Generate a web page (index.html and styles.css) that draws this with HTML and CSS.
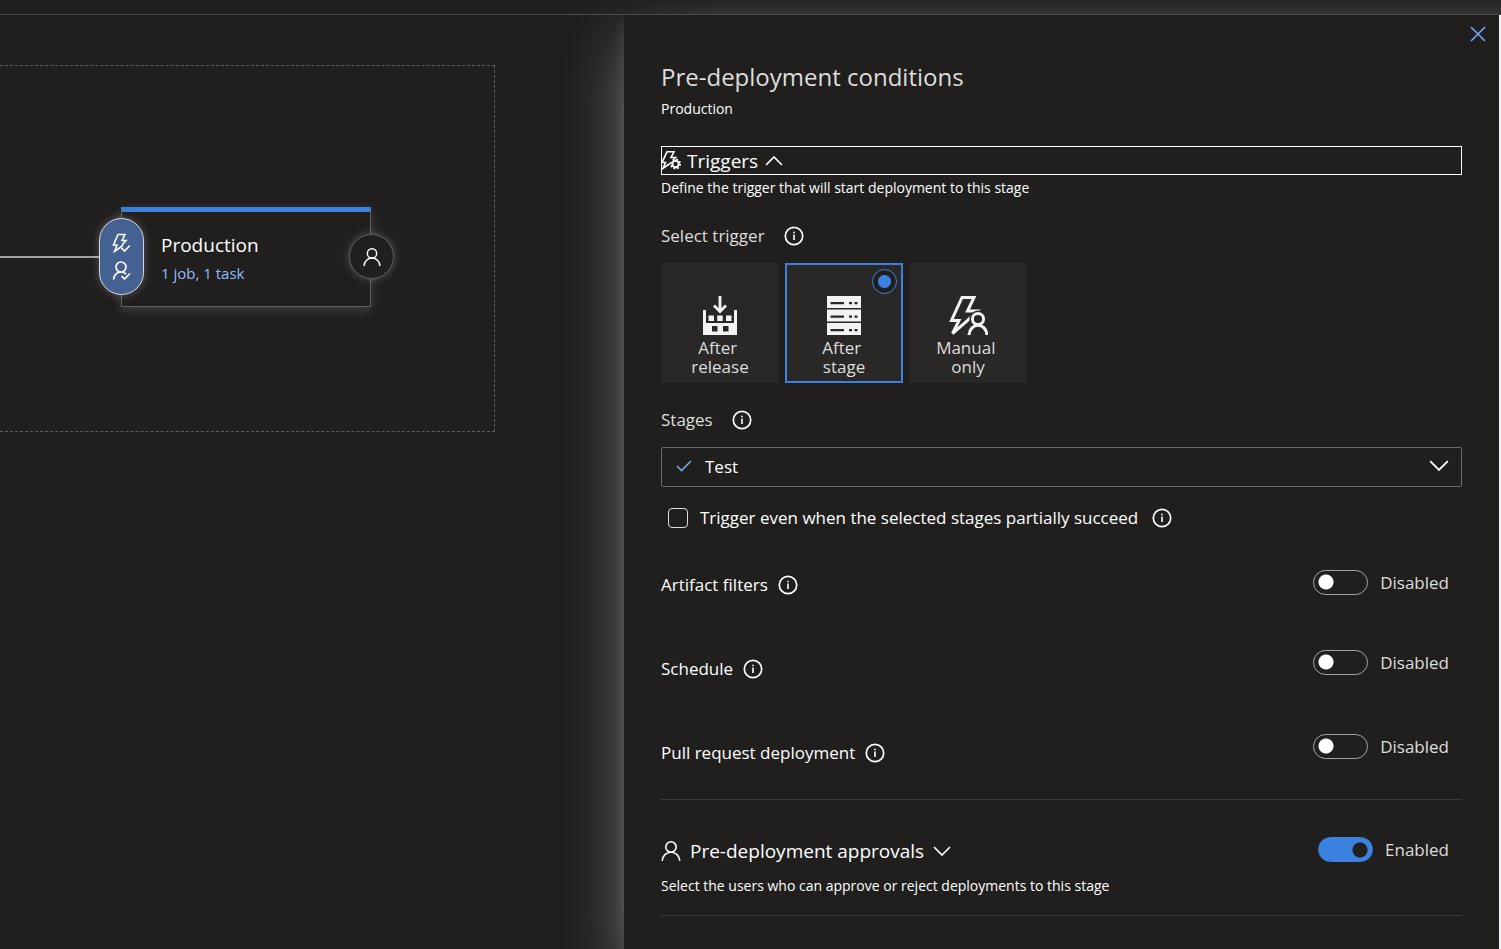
FILE: index.html
```html
<!DOCTYPE html>
<html lang="en">
<head>
<meta charset="utf-8">
<title>Pre-deployment conditions</title>
<link rel="stylesheet" href="styles.css">
</head>
<body>
<svg class="defs" aria-hidden="true">
  <symbol id="info" viewBox="0 0 20 20"><circle cx="10" cy="10" r="8.7" fill="none" stroke="currentColor" stroke-width="1.7"/><path d="M9.2 8.4h1.6V14H9.2zM9.2 5.8h1.6v1.5H9.2z" fill="currentColor"/></symbol>
  <symbol id="person" viewBox="0 0 20 20"><g fill="none" stroke="currentColor" stroke-width="1.6"><circle cx="10" cy="6" r="5.2"/><path d="M1.2 20c.3-5.200 4-8.800 8.800-8.800s8.500 3.600 8.800 8.800"/></g></symbol>
  <symbol id="chevron" viewBox="0 0 18 10"><path d="M1 1l8 8 8-8" fill="none" stroke="currentColor" stroke-width="1.7"/></symbol>
</svg>
<header class="topbar"></header>
<main class="workspace">
  <section class="canvas" aria-label="Stages">
    <div class="stages">
      <div class="connector"></div>
      <article class="stage">
        <button class="pre" aria-label="Pre-deployment conditions">
          <svg width="20" height="20" viewBox="0 0 20 20" fill="none" stroke="currentColor" stroke-width="1.6"><path d="M11 12.500L2.500 18.500 5 12H1.500L6 1.500H13L10 7.500H14L10 12"/><path d="M9.500 15l3 3 5.500-5.500"/></svg>
          <svg width="20" height="20" viewBox="0 0 20 20" fill="none" stroke="currentColor" stroke-width="1.700"><circle cx="9" cy="6" r="5"/><path d="M1.500 18.500c.3-4.500 3.500-7.500 7.500-7.500 2 0 3.500.7 5 2"/><path d="M9.500 15l3 3 5.500-5.500"/></svg>
        </button>
        <h2 class="stage-name">Production</h2>
        <a class="stage-link" href="#">1 job, 1 task</a>
        <button class="post" aria-label="Post-deployment conditions"><svg width="18" height="20"><use href="#person"/></svg></button>
      </article>
    </div>
  </section>
  <aside class="panel">
    <div class="panel-top">
      <button class="close" aria-label="Close"><svg width="16" height="16" viewBox="0 0 16 16"><path d="M1 1l14 14M15 1L1 15" stroke="currentColor" stroke-width="1.600"/></svg></button>
    </div>
    <div class="panel-body">
      <h1 class="title">Pre-deployment conditions</h1>
      <p class="subtitle">Production</p>

      <button class="triggers" aria-expanded="true">
        <svg class="trigger-icon" width="20" height="20" viewBox="0 0 20 20" fill="none" stroke="currentColor" stroke-width="1.600"><path d="M8 12.500L.8 17.500 3.500 11.500H0L5 .8H12L9 6.500H13.500L11.500 8.500"/><circle cx="13.500" cy="13" r="3.200" stroke-width="2"/><circle cx="13.500" cy="13" r="4.700" stroke-width="1.700" stroke-dasharray="1.850 1.840"/></svg>
        <span>Triggers</span>
        <svg class="up" width="18" height="10"><use href="#chevron"/></svg>
      </button>
      <p class="hint">Define the trigger that will start deployment to this stage</p>

      <div class="field-label wide"><span id="trigger-label">Select trigger</span><svg width="20" height="20"><use href="#info"/></svg></div>
      <div class="tiles" role="radiogroup" aria-labelledby="trigger-label">
        <label class="tile"><input type="radio" name="trigger">
          <svg width="34" height="39" viewBox="0 0 34 39"><path d="M17 0v15M11 9.500l6 6 6-6" fill="none" stroke="currentColor" stroke-width="2.800"/><path fill="currentColor" fill-rule="evenodd" d="M0 14h3v13h28V14h3v25H0zM9 30v5.500h5.500V30zM20 30v5.500h5.500V30zM5.500 19.500H11V25H5.500zM14.200 19.500h5.500V25h-5.500zM23 19.500h5.500V25H23z"/></svg>
          <span>After&nbsp;<br>release</span></label>
        <label class="tile"><input type="radio" name="trigger" checked>
          <svg width="34" height="39" viewBox="0 0 34 39"><path fill="currentColor" fill-rule="evenodd" d="M0 0h34v12H0zM3.500 6v2.200H17V6zM22 6v2.200h3V6zM27.500 6v2.200h3V6zM0 13.500h34v12H0zM3.500 19.500v2.200H17v-2.200zM22 19.500v2.200h3v-2.200zM27.500 19.500v2.200h3v-2.200zM0 27h34v12H0zM3.500 33v2.200H17V33zM22 33v2.200h3V33zM27.500 33v2.200h3V33z"/></svg>
          <span>After&nbsp;<br>stage</span></label>
        <label class="tile"><input type="radio" name="trigger">
          <svg width="39" height="39" viewBox="0 0 39 39" fill="none" stroke="currentColor" stroke-width="3"><path d="M13 1.500H25L18.500 15H28L17.500 25.500 3.500 37.500 10 24.500H2.500Z"/><g class="halo"><circle cx="29" cy="23" r="5.600"/><path d="M20 39c.5-6 4.500-9.800 9-9.800s8.500 3.800 9 9.800"/></g><circle cx="29" cy="23" r="5.600"/><path d="M20 39c.5-6 4.500-9.800 9-9.800s8.500 3.800 9 9.800"/></svg>
          <span>Manual&nbsp;<br>only</span></label>
      </div>

      <div class="field-label wide stages-label"><label for="stages">Stages</label><svg width="20" height="20"><use href="#info"/></svg></div>
      <div class="select-box">
        <svg class="tick" width="16" height="12" viewBox="0 0 16 12"><path d="M1 6l4.500 4.500L15 1" fill="none" stroke="currentColor" stroke-width="1.600"/></svg>
        <select id="stages"><option>Test</option></select>
        <svg class="arrow" width="20" height="11"><use href="#chevron"/></svg>
      </div>
      <div class="check-row">
        <input type="checkbox" id="partial"><label for="partial">Trigger even when the selected stages partially succeed</label>
        <svg width="20" height="20"><use href="#info"/></svg>
      </div>

      <div class="option"><div class="field-label"><label for="filters">Artifact filters</label><svg width="20" height="20"><use href="#info"/></svg></div>
        <label class="toggle"><input type="checkbox" role="switch" id="filters">Disabled</label></div>
      <div class="option"><div class="field-label"><label for="schedule">Schedule</label><svg width="20" height="20"><use href="#info"/></svg></div>
        <label class="toggle"><input type="checkbox" role="switch" id="schedule">Disabled</label></div>
      <div class="option"><div class="field-label"><label for="pr">Pull request deployment</label><svg width="20" height="20"><use href="#info"/></svg></div>
        <label class="toggle"><input type="checkbox" role="switch" id="pr">Disabled</label></div>

      <section class="approvals">
        <div class="approvals-row">
          <button class="approvals-title" aria-expanded="false"><svg width="20" height="20"><use href="#person"/></svg><span>Pre-deployment approvals</span><svg width="18" height="10"><use href="#chevron"/></svg></button>
          <label class="toggle"><input type="checkbox" role="switch" checked>Enabled</label>
        </div>
        <p class="hint">Select the users who can approve or reject deployments to this stage</p>
      </section>
    </div>
  </aside>
</main>
</body>
</html>
```
FILE: styles.css
```css
* { box-sizing: border-box; }
body {
  margin: 0;
  min-height: 100vh;
  display: flex;
  flex-direction: column;
  background: #201f1e;
  color: #fff;
  font: 17px/24px "Open Sans", "Noto Sans", sans-serif;
  overflow-x: hidden;
}
h1, h2, p { margin: 0; font-weight: 400; }
button { padding: 0; border: 0; background: none; color: inherit; font: inherit; cursor: pointer; }
input { margin: 0; appearance: none; flex: none; }
svg { flex: none; display: block; }
.defs { position: absolute; width: 0; height: 0; }

.topbar {
  height: 15px;
  border-bottom: 1px solid #4b4a49;
  background:
    linear-gradient(90deg, #201f1e 38%, transparent 48%),
    linear-gradient(#252423, #343332);
}
.workspace { flex: 1; display: flex; overflow: hidden; }

.canvas { flex: 1; min-width: 0; padding-top: 50px; }
.stages {
  display: flex;
  width: 495px;
  height: 367px;
  padding-top: 141px;
  border: 1px dashed #5f5e5d;
  border-left: 0;
}
.connector { width: 121px; height: 2px; margin-top: 49px; background: #a09f9e; }
.stage {
  position: relative;
  width: 250px;
  height: 100px;
  padding: 20px 39px;
  border: 1px solid #605e5c;
  border-top: 5px solid #3b82e0;
  background: #201f1e;
  box-shadow: 0 3px 10px rgba(255, 255, 255, .16);
}
.stage-name { font-size: 19px; line-height: 26px; }
.stage-link { display: block; margin-top: 4px; color: #8fbcfb; font-size: 15px; line-height: 22px; text-decoration: none; }
.pre, .post {
  position: absolute;
  display: flex;
  flex-direction: column;
  align-items: center;
  justify-content: center;
  width: 45px;
  box-shadow: 0 0 8px rgba(255, 255, 255, .25);
}
.pre { left: -23px; top: 6px; height: 77px; gap: 8px; border: 1px solid #d3d8e0; border-radius: 23px; background: #446191; }
.post { right: -24px; top: 22px; height: 45px; border: 1px solid #605e5c; border-radius: 50%; background: #201f1e; }

.panel {
  width: 877px;
  max-width: 100%;
  border-right: 2px solid #f0f0f0;
  background: #201f1e;
  box-shadow: 0 26px 58px rgba(255, 255, 255, .34), 0 5px 14px rgba(255, 255, 255, .1);
}
.panel-top { display: flex; justify-content: flex-end; padding: 3px 5px 0; }
.close { display: grid; place-items: center; width: 32px; height: 32px; color: #6fa8fa; }
.panel-body { padding: 11px 37px 33px; }
.title { color: #dedddc; font-size: 24px; line-height: 32px; }
.subtitle { margin-top: 6px; font-size: 14px; line-height: 20px; }
.triggers {
  display: flex;
  align-items: center;
  gap: 7px;
  width: 100%;
  height: 29px;
  margin: 27px 0 3px;
  border: 1px solid #fff;
  font-size: 19px;
}
.trigger-icon { margin-right: -2px; }
.up { transform: rotate(180deg); }
.hint { font-size: 14px; line-height: 20px; }

.field-label { display: flex; align-items: center; gap: 10px; }
.wide { gap: 19px; margin: 26px 0 15px; color: #dedddc; }
.wide svg { color: #fff; }
.stages-label { margin-top: 25px; }

.tiles { display: flex; gap: 6px; }
.tile {
  position: relative;
  display: flex;
  flex-direction: column;
  align-items: center;
  width: 118px;
  height: 120px;
  padding-top: 33px;
  gap: 3px;
  background: #292827;
  color: #dedddc;
  line-height: 19px;
  text-align: center;
}
.tile svg { color: #f4f3f2; }
.tile input { position: absolute; top: 6px; right: 6px; width: 25px; height: 25px; border-radius: 50%; opacity: 0; }
.tile input:checked { opacity: 1; border: 1px solid #3b82e0; background: radial-gradient(circle, #3b82e0 6px, #201f1e 7px); }
.tile:has(:checked) { outline: 2px solid #3b82e0; outline-offset: -2px; }
.halo { stroke: #292827; stroke-width: 6; fill: #292827; }

.select-box { position: relative; }
.select-box select {
  display: block;
  appearance: none;
  width: 100%;
  height: 40px;
  padding: 0 43px;
  border: 1px solid #6b6a69;
  border-radius: 2px;
  background: transparent;
  color: #fff;
  font: inherit;
}
.tick, .arrow { position: absolute; pointer-events: none; }
.tick { left: 15px; top: 13px; color: #6fa8fa; }
.arrow { right: 13px; top: 13px; }

.check-row { display: flex; align-items: center; gap: 14px; margin-top: 19px; padding-left: 7px; }
.check-row input { width: 20px; height: 20px; margin-right: -2px; border: 1px solid #dedddc; border-radius: 4px; }

.option { display: flex; justify-content: space-between; align-items: flex-start; height: 84px; }
.check-row + .option { margin-top: 40px; }
.option .field-label { padding-top: 3px; }
.option + .option .toggle { margin-top: -4px; }
.toggle { display: flex; align-items: center; gap: 12px; margin-right: 13px; color: #dedddc; }
.toggle input {
  width: 55px;
  height: 25px;
  border: 1px solid #a5a4a3;
  border-radius: 13px;
  background: radial-gradient(circle at 12px 11px, #fff 7px, transparent 8px);
}
.toggle input:checked { border-color: #3b82e0; background: radial-gradient(circle at 41px 12px, #201f1e 7px, #3b82e0 8px); }

.approvals { margin-top: -23px; padding: 37px 0 19px; border-top: 1px solid #3b3a39; border-bottom: 1px solid #3b3a39; }
.approvals-row { display: flex; justify-content: space-between; align-items: flex-start; margin-bottom: 11px; }
.approvals-title { display: flex; align-items: center; gap: 9px; font-size: 19px; line-height: 28px; }
```
